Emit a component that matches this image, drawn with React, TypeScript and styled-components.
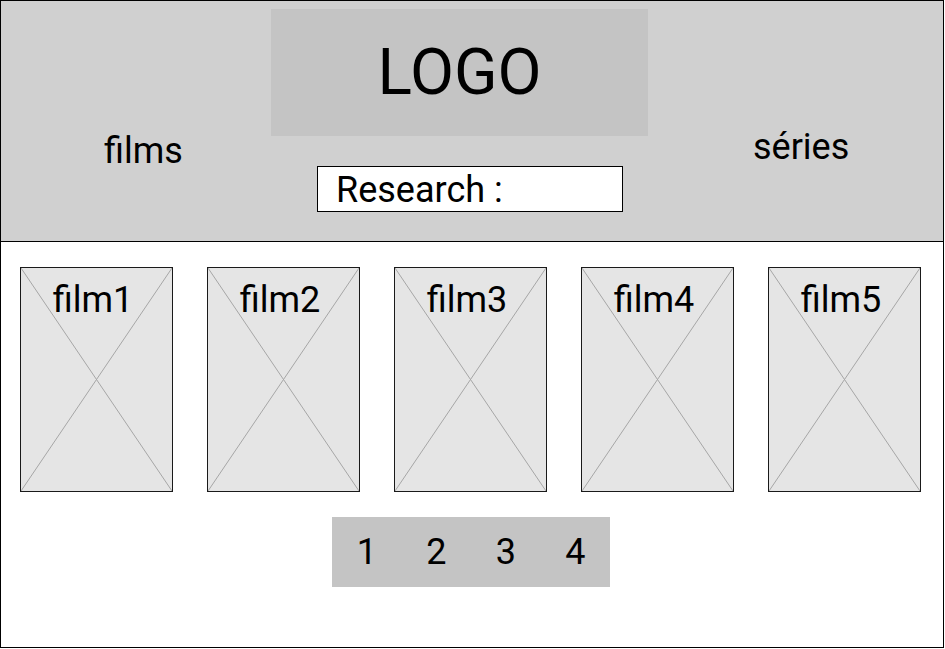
import styled, { createGlobalStyle } from "styled-components";

const GlobalStyle = createGlobalStyle`
  html, body {
    margin: 0;
    padding: 0;
    background: #ffffff;
  }

  body {
    font-family: Roboto, "Liberation Sans", sans-serif;
    color: #000000;
  }
`;

const Frame = styled.div`
  width: 944px;
  height: 648px;
  box-sizing: border-box;
  border: 1px solid #000;
  background-color: #ffffff;
  display: flex;
  flex-direction: column;
`;

const Header = styled.header`
  height: 240px;
  flex-shrink: 0;
  display: flex;
  flex-direction: row;
  background-color: #d0d0d0;
  border-bottom: 1px solid #000;
`;

const NavLink = styled.div<{ $width?: number; $top: number; $left: number }>`
  ${({ $width }) => ($width ? `width: ${$width}px;` : "flex: 1;")}
  box-sizing: border-box;
  padding-top: ${({ $top }) => $top}px;
  padding-left: ${({ $left }) => $left}px;
  font-size: 36px;
  line-height: 1.172;
`;

const Center = styled.div`
  width: 377px;
  padding-top: 8px;
  display: flex;
  flex-direction: column;
  align-items: flex-start;
`;

const Logo = styled.div`
  width: 100%;
  height: 127px;
  background-color: #c4c4c4;
  display: flex;
  align-items: center;
  justify-content: center;
  font-size: 64px;
`;

const Search = styled.div`
  margin: 30px 0 0 46px;
  width: 306px;
  height: 46px;
  box-sizing: border-box;
  border: 1px solid #000;
  background-color: #ffffff;
  padding: 1px 0 0 18px;
  font-size: 36px;
  line-height: 44px;
`;

const Main = styled.main`
  padding: 25px 0 0 19px;
  display: flex;
  flex-direction: column;
`;

const CardRow = styled.div`
  display: flex;
  flex-direction: row;
  gap: 34px;
`;

const Card = styled.div`
  position: relative;
  width: 153px;
  height: 225px;
  box-sizing: border-box;
  border: 1px solid #1a1a1a;
  background-color: #e5e5e5;
  padding: 11px 7px 0 0;
  text-align: center;
  font-size: 36px;
  line-height: 1.172;
`;

const Cross = styled.svg`
  position: absolute;
  inset: 0;
  width: 100%;
  height: 100%;
`;

const CardTitle = styled.span`
  position: relative;
`;

const Pager = styled.nav`
  margin: 25px 0 0 312px;
  height: 70px;
  display: grid;
  grid-template-columns: repeat(4, 69.5px);
  width: fit-content;
  background-color: #c4c4c4;
`;

const PageNumber = styled.span`
  text-align: center;
  font-size: 36px;
  line-height: 70px;
`;

const films = ["film1", "film2", "film3", "film4", "film5"];
const pages = [1, 2, 3, 4];

export default function App() {
  return (
    <>
      <GlobalStyle />
      <Frame>
        <Header>
          <NavLink $width={270} $top={129} $left={103}>
            films
          </NavLink>
          <Center>
            <Logo>LOGO</Logo>
            <Search>Research :</Search>
          </Center>
          <NavLink $top={125} $left={105}>
            séries
          </NavLink>
        </Header>
        <Main>
          <CardRow>
            {films.map((film) => (
              <Card key={film}>
                <Cross viewBox="0 0 100 100" preserveAspectRatio="none">
                  <line x1="0" y1="0" x2="100" y2="100" stroke="#a6a6a6" strokeWidth="1" vectorEffect="non-scaling-stroke" />
                  <line x1="100" y1="0" x2="0" y2="100" stroke="#a6a6a6" strokeWidth="1" vectorEffect="non-scaling-stroke" />
                </Cross>
                <CardTitle>{film}</CardTitle>
              </Card>
            ))}
          </CardRow>
          <Pager>
            {pages.map((page) => (
              <PageNumber key={page}>{page}</PageNumber>
            ))}
          </Pager>
        </Main>
      </Frame>
    </>
  );
}
